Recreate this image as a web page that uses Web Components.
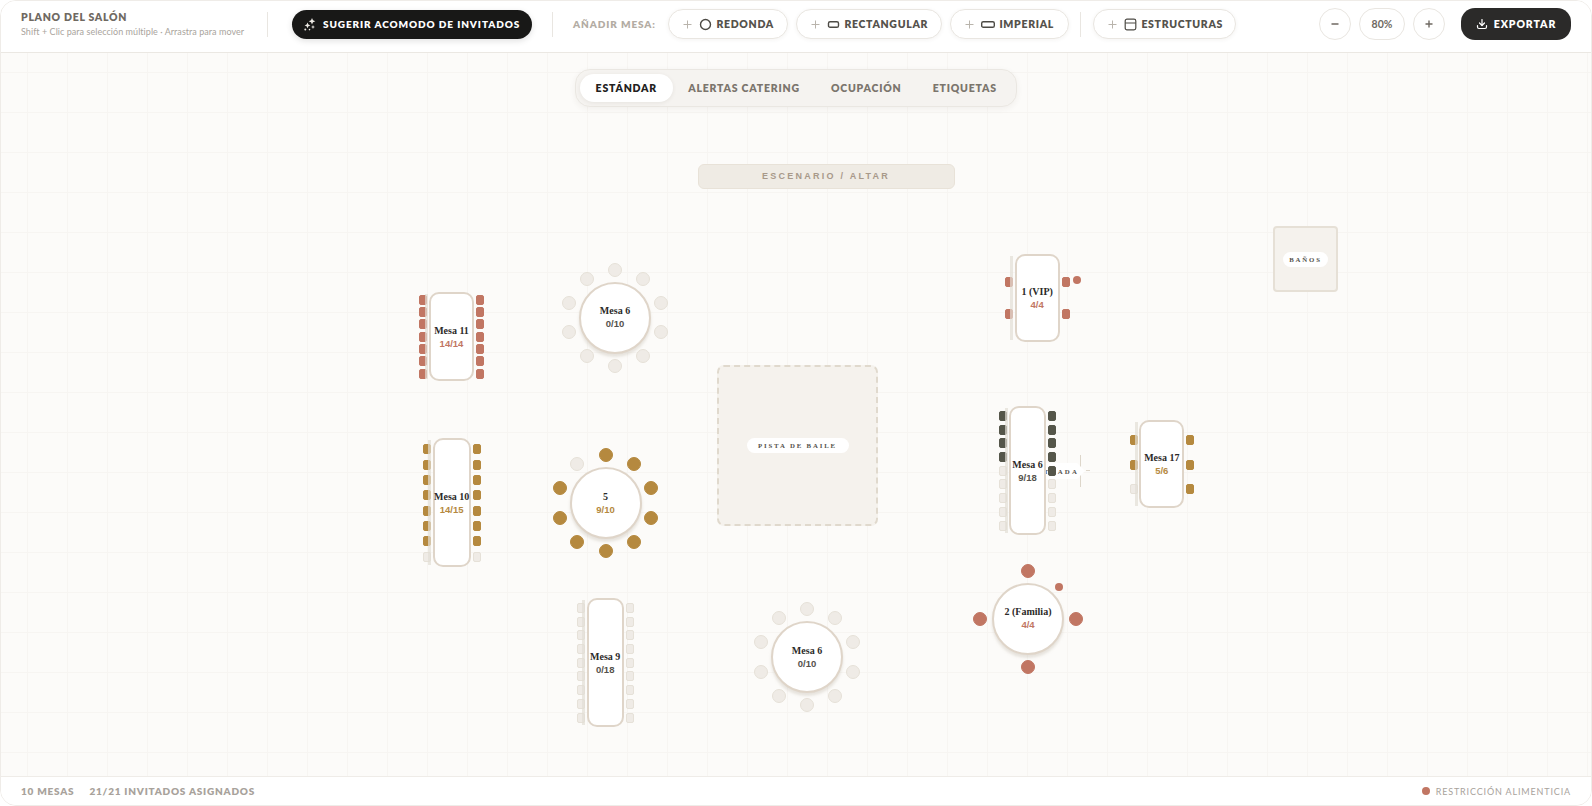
<!DOCTYPE html>
<html lang="es">
<head>
<meta charset="utf-8">
<title>Plano del salón</title>
<style>
  html, body { margin: 0; height: 100%; background: #fff; overflow: hidden; }
  body { font-family: "Lato", "Liberation Sans", sans-serif; }
</style>
</head>
<body>
<plan-app>
  <plan-toolbar slot="toolbar">
    <sparkle-button></sparkle-button>
    <span slot="add-label">AÑADIR MESA:</span>
    <tool-pill slot="add" icon="circle" width="120">REDONDA</tool-pill>
    <tool-pill slot="add" icon="rect" width="146">RECTANGULAR</tool-pill>
    <tool-pill slot="add" icon="long" width="119">IMPERIAL</tool-pill>
    <tool-pill slot="structures" icon="panel" width="143">ESTRUCTURAS</tool-pill>
  </plan-toolbar>

  <floor-canvas slot="canvas">
    <view-tabs></view-tabs>

    <floor-zone x="697.5" y="163.5" w="257" h="25" kind="stage">ESCENARIO / ALTAR</floor-zone>
    <floor-zone x="717" y="364.5" w="161" h="161.5" kind="dance" label-w="102">PISTA DE BAILE</floor-zone>
    <floor-zone x="1273" y="226" w="65" h="66" kind="room" label-w="45">BAÑOS</floor-zone>

    <entry-mark></entry-mark>

    <seat-table kind="rect" x="429" y="292" w="45" h="89" name="Mesa 11" count="14/14" tone="terra"
      first="7.7" step="12.3" left="1111111" right="1111111"></seat-table>
    <seat-table kind="rect" x="432.7" y="438.3" w="38" h="129" name="Mesa 10" count="14/15" tone="gold"
      first="11" step="15.33" left="11111110" right="11111110"></seat-table>
    <seat-table kind="rect" x="586.7" y="598.3" w="37" h="129" name="Mesa 9" count="0/18"
      first="9.7" step="13.7" left="000000000" right="000000000"></seat-table>
    <seat-table kind="rect" x="1014.7" y="254" w="45" h="88" name="1 (VIP)" count="4/4" tone="terra"
      first="28" step="32.3" left="11" right="11" dot="62.5,25.7"></seat-table>
    <seat-table kind="rect" x="1009" y="406.3" w="37" h="129" name="Mesa 6" count="9/18" tone="dark"
      first="9.7" step="13.7" left="111100000" right="111110000"></seat-table>
    <seat-table kind="rect" x="1139.3" y="420.3" w="45" h="88" name="Mesa 17" count="5/6" tone="gold"
      first="20" step="24.4" left="110" right="111"></seat-table>

    <seat-table kind="round" x="579" y="281.5" w="72" h="72" name="Mesa 6" count="0/10" seats="0000000000"></seat-table>
    <seat-table kind="round" x="569.5" y="467" w="72" h="72" name="5" count="9/10" tone="gold" seats="1111111110"></seat-table>
    <seat-table kind="round" x="771" y="621" w="72" h="72" name="Mesa 6" count="0/10" seats="0000000000"></seat-table>
    <seat-table kind="round" x="992" y="582.5" w="72" h="72" name="2 (Familia)" count="4/4" tone="terra" seats="1111" dot="66.5,4.5"></seat-table>
  </floor-canvas>

  <status-bar slot="status"></status-bar>
</plan-app>

<script>
const OX = 1, OY = 53; // canvas origin inside the frame, page coords are easier to read

const ICONS = {
  circle: '<svg width="13" height="13" viewBox="0 0 13 13"><circle cx="6.5" cy="6.5" r="5" fill="none" stroke="#4d4b45" stroke-width="1.4"/></svg>',
  rect: '<svg width="13" height="13" viewBox="0 0 13 13"><rect x="1.5" y="3.7" width="10" height="5.6" rx="1.6" fill="none" stroke="#4d4b45" stroke-width="1.4"/></svg>',
  long: '<svg width="14" height="13" viewBox="0 0 14 13"><rect x=".7" y="3.7" width="12.6" height="5.6" rx="1.6" fill="none" stroke="#4d4b45" stroke-width="1.4"/></svg>',
  panel: '<svg width="13" height="13" viewBox="0 0 13 13"><rect x="1.2" y="1.2" width="10.6" height="10.6" rx="1.8" fill="none" stroke="#4d4b45" stroke-width="1.2"/><path d="M1.2 5h10.6" stroke="#4d4b45" stroke-width="1.2"/></svg>'
};

class PlanApp extends HTMLElement {
  constructor() {
    super();
    this.attachShadow({mode: 'open'}).innerHTML = `
      <style>
        :host { display: flex; flex-direction: column; height: 100vh; box-sizing: border-box;
          border: 1px solid #efece8; border-radius: 16px; overflow: hidden; background: #fff; }
        ::slotted([slot=canvas]) { flex: 1; min-height: 0; }
      </style>
      <slot name="toolbar"></slot>
      <slot name="canvas"></slot>
      <slot name="status"></slot>`;
  }
}

class PlanToolbar extends HTMLElement {
  constructor() {
    super();
    this.attachShadow({mode: 'open'}).innerHTML = `
      <style>
        :host { display: flex; align-items: center; height: 46px; flex: none;
          padding: 0 20px 5px; background: #fff; border-bottom: 1px solid #ebe8e3; }
        .title { width: 222px; margin-right: 24px; }
        .title b { display: block; font: 800 10.5px/13px "Lato", sans-serif; letter-spacing: .7px; color: #6f6962; }
        .title span { display: block; margin-top: 2px; font: 400 9px/12px "Lato", sans-serif; letter-spacing: .05px; color: #a9a49d; white-space: nowrap; }
        .sep { width: 1px; height: 25px; background: #e9e6e1; flex: none; }
        .add { display: flex; align-items: center; gap: 8px; }
        ::slotted([slot=add-label]) { font: 800 10px/13px "Lato", sans-serif; letter-spacing: .9px; color: #b3aca3; margin: 0 12px 0 20px; }
        .spacer { flex: 1; }
        .zoom { display: flex; align-items: center; gap: 8px; margin-right: 16px; }
        .z { height: 32px; width: 32px; box-sizing: border-box; border: 1px solid #e9e6e1; border-radius: 16px; display: flex;
          align-items: center; justify-content: center; background: #fff; color: #6f6962; font: 700 10.5px "Lato", sans-serif; }
        .z.pct { width: 46px; }
        .export { width: 110px; height: 32px; border-radius: 14px; background: #2b2a29; color: #fff; display: flex; align-items: center;
          justify-content: center; gap: 6px; font: 800 10.5px "Lato", sans-serif; letter-spacing: .9px; }
      </style>
      <div class="title"><b>PLANO DEL SALÓN</b><span>Shift + Clic para selección múltiple · Arrastra para mover</span></div>
      <div class="sep" style="margin-right:24px"></div>
      <slot></slot>
      <div class="sep" style="margin-left:20px"></div>
      <slot name="add-label"></slot>
      <div class="add"><slot name="add"></slot></div>
      <div class="sep" style="margin:0 12px 0 11px"></div>
      <slot name="structures"></slot>
      <div class="spacer"></div>
      <div class="zoom">
        <div class="z"><svg width="10" height="10" viewBox="0 0 10 10"><path d="M1.5 5h7" stroke="#6f6962" stroke-width="1.4"/></svg></div>
        <div class="z pct">80%</div>
        <div class="z"><svg width="10" height="10" viewBox="0 0 10 10"><path d="M1.5 5h7M5 1.5v7" stroke="#6f6962" stroke-width="1.4"/></svg></div>
      </div>
      <div class="export">
        <svg width="12" height="12" viewBox="0 0 24 24" fill="none" stroke="#fff" stroke-width="2.4" stroke-linecap="round" stroke-linejoin="round"><path d="M21 15v3a3 3 0 0 1-3 3H6a3 3 0 0 1-3-3v-3"/><path d="M7 10l5 5 5-5"/><path d="M12 15V3"/></svg>
        EXPORTAR
      </div>`;
  }
}

class SparkleButton extends HTMLElement {
  constructor() {
    super();
    this.attachShadow({mode: 'open'}).innerHTML = `
      <style>
        :host { display: flex; align-items: center; gap: 7px; width: 240px; height: 29px; box-sizing: border-box; padding-left: 12px; flex: none;
          border-radius: 15px; background: #181817; color: #fff; font: 800 10px "Lato", sans-serif; letter-spacing: .9px;
          box-shadow: 0 2px 6px rgba(0,0,0,.12); white-space: nowrap; }
      </style>
      <svg width="12" height="13" viewBox="0 0 12 13" fill="#ece9e4"><path d="M8 0l1 2.300 2.300 1-2.300 1L8 6.600l-1-2.300-2.300-1 2.300-1z"/><path d="M3.500 4.500l.9 2 2 .9-2 .9-.9 2-.9-2-2-.9 2-.9z"/><path d="M9 7l.6 1.400 1.400.6-1.400.6L9 11l-.6-1.400L7 9l1.400-.6z"/><circle cx="1.300" cy="11.600" r="1"/><circle cx="5.500" cy="11.600" r=".8"/></svg>
      <span>SUGERIR ACOMODO DE INVITADOS</span>`;
  }
}

class ToolPill extends HTMLElement {
  constructor() {
    super();
    this.attachShadow({mode: 'open'}).innerHTML = `
      <style>
        :host { display: flex; align-items: center; height: 30px; box-sizing: border-box; padding-left: 14px; gap: 7.5px; flex: none;
          border: 1px solid #e9e6e1; border-radius: 15px; background: #fff; box-shadow: 0 1px 4px rgba(60,50,40,.06);
          font: 800 10.5px "Lato", sans-serif; letter-spacing: .68px; color: #55524c; white-space: nowrap; }
        .ic { display: flex; margin-right: -3.500px; }
      </style>
      <svg width="9" height="9" viewBox="0 0 9 9"><path d="M.5 4.500h8M4.500.5v8" stroke="#b9b4ac" stroke-width="1"/></svg>
      <span class="ic" id="ic"></span>
      <slot></slot>`;
  }
  connectedCallback() {
    this.style.width = this.getAttribute('width') + 'px';
    this.shadowRoot.querySelector('#ic').innerHTML = ICONS[this.getAttribute('icon')];
  }
}

class FloorCanvas extends HTMLElement {
  constructor() {
    super();
    this.attachShadow({mode: 'open'}).innerHTML = `
      <style>
        :host { display: block; position: relative; overflow: hidden; background-color: #fcfbf9;
          background-image: linear-gradient(to right, #f7f5f2 1px, transparent 1px), linear-gradient(to bottom, #f7f5f2 1px, transparent 1px);
          background-size: 40px 40px; background-position: 26px 19px; }
      </style>
      <slot></slot>`;
  }
}

class ViewTabs extends HTMLElement {
  constructor() {
    super();
    this.attachShadow({mode: 'open'}).innerHTML = `
      <style>
        :host { position: absolute; top: 16px; left: 574px; display: flex; padding: 4px; box-sizing: border-box; height: 38px;
          background: #f5f3f0; border: 1px solid #eae7e2; border-radius: 15px; box-shadow: 0 2px 6px rgba(60,50,40,.06);
          font: 800 10.5px "Lato", sans-serif; letter-spacing: .78px; color: #7b756d; }
        div { display: flex; align-items: center; padding: 0 15.600px; border-radius: 14px; white-space: nowrap; }
        .on { background: #fff; color: #222120; box-shadow: 0 1px 4px rgba(60,50,40,.08); }
      </style>
      <div class="on">ESTÁNDAR</div><div>ALERTAS CATERING</div><div>OCUPACIÓN</div><div>ETIQUETAS</div>`;
  }
}

class FloorZone extends HTMLElement {
  constructor() {
    super();
    this.attachShadow({mode: 'open'}).innerHTML = `
      <style>
        :host { position: absolute; display: flex; align-items: center; justify-content: center; box-sizing: border-box; }
        :host([kind=stage]) { background: #efebe4; border: 1px solid #e8e2d8; border-radius: 6px;
          font: 700 9px "Liberation Sans", sans-serif; letter-spacing: 2.25px; color: #a8998a; }
        :host([kind=dance]) { background: #f5f2ed; border: 2px dashed #e0d9cd; border-radius: 7px; }
        :host([kind=room]) { background: #f5f2ed; border: 2px solid #e6e0d6; border-radius: 4px; }
        :host([kind=dance]) span, :host([kind=room]) span { display: flex; align-items: center; justify-content: center; height: 15px; background: #fff; border-radius: 8px;
          font: 700 6.8px "Liberation Serif", serif; letter-spacing: 1.85px; color: #55524c; white-space: nowrap; }
      </style>
      <span><slot></slot></span>`;
  }
  connectedCallback() {
    const a = (n) => this.getAttribute(n);
    this.style.left = (a('x') - OX) + 'px';
    this.style.top = (a('y') - OY) + 'px';
    this.style.width = a('w') + 'px';
    this.style.height = a('h') + 'px';
    if (a('label-w')) this.shadowRoot.querySelector('span').style.width = a('label-w') + 'px';
  }
}

class EntryMark extends HTMLElement {
  constructor() {
    super();
    this.attachShadow({mode: 'open'}).innerHTML = `
      <style>
        :host { position: absolute; left: ${1030 - OX}px; top: ${455 - OY}px; width: 60px; height: 32px; }
        .line { position: absolute; left: 50px; top: 0; width: 1px; height: 32px; background: #ddd6ca; }
        .dash { position: absolute; left: 56px; top: 15px; width: 4px; height: 1px; background: #ddd6ca; }
        .tag { position: absolute; left: 0; top: 8px; width: 55px; height: 16px; box-sizing: border-box; padding-right: 6px; background: #fff;
          clip-path: polygon(0 0, calc(100% - 8px) 0, 100% 50%, calc(100% - 8px) 100%, 0 100%);
          display: flex; align-items: center; justify-content: flex-end;
          font: 700 6.8px "Liberation Serif", serif; letter-spacing: 2.2px; color: #55524c; white-space: nowrap; }
      </style>
      <div class="line"></div><div class="tag">ENTRADA</div><div class="dash"></div>`;
  }
}

const TONES = { terra: '#c17663', gold: '#b5893f', dark: '#55564a' };

class SeatTable extends HTMLElement {
  constructor() {
    super();
    this.attachShadow({mode: 'open'}).innerHTML = `
      <style>
        :host { position: absolute; display: block; }
        .top { position: absolute; inset: 0; box-sizing: border-box; background: #fff; border: 2px solid #dfd5c9; display: flex; flex-direction: column;
          align-items: center; justify-content: center; }
        :host([kind=rect]) .top { border-radius: 10px; }
        :host([kind=rect]) .top::before { content: ""; position: absolute; left: -6.500px; top: 0; bottom: 0; width: 3px; background: rgba(226,222,214,.7); }
        :host([kind=round]) .top { border-radius: 50%; padding-bottom: 1px; box-shadow: 0 3px 3px rgba(190,180,165,.35); }
        .name { font: 700 10px/13px "Liberation Serif", serif; color: #2b2a28; white-space: nowrap; }
        .count { font: 700 9.500px/13px "Liberation Sans", sans-serif; color: #55524c; white-space: nowrap; }
        .seat { position: absolute; box-sizing: border-box; background: var(--fill); border: 1px solid var(--edge); }
        .seat.r { width: 8px; height: 10px; border-radius: 2px; }
        .seat.c { width: 14px; height: 14px; border-radius: 50%; }
        .dot { position: absolute; width: 8px; height: 8px; margin: -4px 0 0 -4px; border-radius: 50%; }
      </style>
      <div id="seats"></div>
      <div class="top"><div class="name"></div><div class="count"></div></div>`;
  }

  connectedCallback() {
    const a = (n) => this.getAttribute(n);
    const w = +a('w'), h = +a('h');
    const tone = TONES[a('tone')];
    this.style.left = (a('x') - OX) + 'px';
    this.style.top = (a('y') - OY) + 'px';
    this.style.width = w + 'px';
    this.style.height = h + 'px';
    this.shadowRoot.querySelector('.name').textContent = a('name');
    const count = this.shadowRoot.querySelector('.count');
    count.textContent = a('count');
    if (tone && a('tone') !== 'dark') count.style.color = tone;

    const seats = this.shadowRoot.querySelector('#seats');
    const add = (cls, left, top, on) => {
      const s = document.createElement('div');
      s.className = 'seat ' + cls;
      s.style.left = left + 'px';
      s.style.top = top + 'px';
      s.style.setProperty('--fill', on === '1' ? tone : '#efebe6');
      s.style.setProperty('--edge', on === '1' ? tone : '#e6e1d8');
      seats.appendChild(s);
    };

    if (a('kind') === 'rect') {
      const first = +a('first'), step = +a('step');
      [...a('left')].forEach((on, i) => add('r', -9.7, first + step * i - 5, on));
      [...a('right')].forEach((on, i) => add('r', w + 2, first + step * i - 5, on));
    } else {
      const list = [...a('seats')];
      list.forEach((on, i) => {
        const ang = i * 2 * Math.PI / list.length;
        add('c', w / 2 + 48 * Math.sin(ang) - 7, h / 2 - 48 * Math.cos(ang) - 7, on);
      });
    }
    if (a('dot')) {
      const [dx, dy] = a('dot').split(',');
      const d = document.createElement('div');
      d.className = 'dot';
      d.style.left = dx + 'px';
      d.style.top = dy + 'px';
      d.style.background = tone;
      seats.appendChild(d);
    }
  }
}

class StatusBar extends HTMLElement {
  constructor() {
    super();
    this.attachShadow({mode: 'open'}).innerHTML = `
      <style>
        :host { display: flex; align-items: center; height: 28px; flex: none; padding: 0 20px; background: #fff; border-top: 1px solid #efece8;
          font: 800 10px "Lato", sans-serif; letter-spacing: .77px; color: #a8a29b; }
        span + span { margin-left: 15px; }
        .legend { margin-left: auto; display: flex; align-items: center; gap: 6px; font-weight: 400; font-size: 9px; letter-spacing: .85px; }
        i { width: 8px; height: 8px; border-radius: 50%; background: #c17663; }
      </style>
      <span>10 MESAS</span><span>21/21 INVITADOS ASIGNADOS</span>
      <div class="legend"><i></i>RESTRICCIÓN ALIMENTICIA</div>`;
  }
}

customElements.define('plan-app', PlanApp);
customElements.define('plan-toolbar', PlanToolbar);
customElements.define('sparkle-button', SparkleButton);
customElements.define('tool-pill', ToolPill);
customElements.define('floor-canvas', FloorCanvas);
customElements.define('view-tabs', ViewTabs);
customElements.define('floor-zone', FloorZone);
customElements.define('entry-mark', EntryMark);
customElements.define('seat-table', SeatTable);
customElements.define('status-bar', StatusBar);
</script>
</body>
</html>
